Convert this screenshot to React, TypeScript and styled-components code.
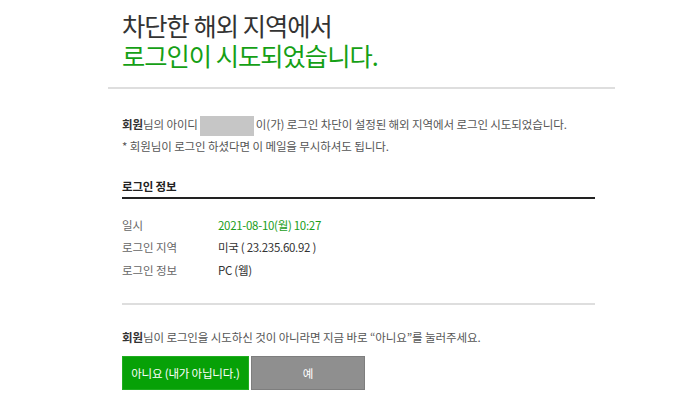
import React from "react";
import styled, { createGlobalStyle } from "styled-components";

const Global = createGlobalStyle`
  html, body { margin: 0; padding: 0; background: #fff; }
  body { font-family: "Noto Sans CJK KR", "Noto Sans", sans-serif; }
`;

const Page = styled.div`
  margin-left: 108px;
  width: 507px;
`;

const Header = styled.header`
  padding: 10px 0 17px 14px;
  border-bottom: 2px solid #dedede;
`;

const TitleLine = styled.div<{ $accent?: boolean }>`
  font-size: 25.3px;
  line-height: 30px;
  letter-spacing: -1px;
  color: ${(p) => (p.$accent ? "#15a015" : "#333")};
`;

const Content = styled.main`
  padding: 0 20px 0 14px;
`;

const Text = styled.p`
  margin: 0;
  font-size: 11.5px;
  line-height: 20px;
  letter-spacing: -0.1px;
  color: #555;
`;

const Intro = styled.div`
  margin-top: 25px;
`;

const Strong = styled.b`
  color: #333;
  font-weight: 700;
`;

const Mask = styled.span`
  display: inline-block;
  width: 54px;
  height: 20px;
  background: #c6c6c6;
  vertical-align: middle;
  margin: 0 2px 0 2px;
`;

const SectionTitle = styled.h2`
  margin: 20px 0 0;
  padding-bottom: 1px;
  font-size: 11.5px;
  line-height: 20px;
  font-weight: 700;
  color: #222;
  letter-spacing: -0.2px;
  border-bottom: 2px solid #222;
`;

const InfoList = styled.dl`
  margin: 15px 0 0;
  padding-bottom: 22px;
  border-bottom: 2px solid #dedede;
`;

const Row = styled.div`
  display: grid;
  grid-template-columns: 96px 1fr;
  font-size: 11.5px;
  line-height: 22.5px;
  letter-spacing: -0.1px;
`;

const Label = styled.dt`
  color: #666;
`;

const Value = styled.dd<{ $accent?: boolean }>`
  margin: 0;
  color: ${(p) => (p.$accent ? "#1a9e1a" : "#333")};
  letter-spacing: -0.3px;
`;

const Notice = styled.div`
  margin-top: 22px;
`;

const Buttons = styled.div`
  display: flex;
  gap: 2px;
  margin-top: 9px;
`;

const Button = styled.button<{ $variant: "green" | "gray"; $w: number }>`
  width: ${(p) => p.$w}px;
  height: 34px;
  padding: 0;
  font-family: inherit;
  font-size: 11.5px;
  letter-spacing: -0.2px;
  color: #fff;
  cursor: pointer;
  background: ${(p) => (p.$variant === "green" ? "#07a107" : "#8f8f8f")};
  border: 1px solid ${(p) => (p.$variant === "green" ? "#20ad20" : "#7e7e7e")};
`;

export default function App() {
  return (
    <>
      <Global />
      <Page>
        <Header>
          <TitleLine>차단한 해외 지역에서</TitleLine>
          <TitleLine $accent>로그인이 시도되었습니다.</TitleLine>
        </Header>
        <Content>
          <Intro>
            <Text>
              <Strong>회원</Strong>님의 아이디<Mask />이(가) 로그인 차단이 설정된 해외 지역에서 로그인 시도되었습니다.
            </Text>
            <Text>* 회원님이 로그인 하셨다면 이 메일을 무시하셔도 됩니다.</Text>
          </Intro>
          <SectionTitle>로그인 정보</SectionTitle>
          <InfoList>
            <Row>
              <Label>일시</Label>
              <Value $accent>2021-08-10(월) 10:27</Value>
            </Row>
            <Row>
              <Label>로그인 지역</Label>
              <Value>미국 ( 23.235.60.92 )</Value>
            </Row>
            <Row>
              <Label>로그인 정보</Label>
              <Value>PC (웹)</Value>
            </Row>
          </InfoList>
          <Notice>
            <Text>
              <Strong>회원</Strong>님이 로그인을 시도하신 것이 아니라면 지금 바로 “아니요”를 눌러주세요.
            </Text>
          </Notice>
          <Buttons>
            <Button $variant="green" $w={127}>아니요 (내가 아닙니다.)</Button>
            <Button $variant="gray" $w={114}>예</Button>
          </Buttons>
        </Content>
      </Page>
    </>
  );
}
